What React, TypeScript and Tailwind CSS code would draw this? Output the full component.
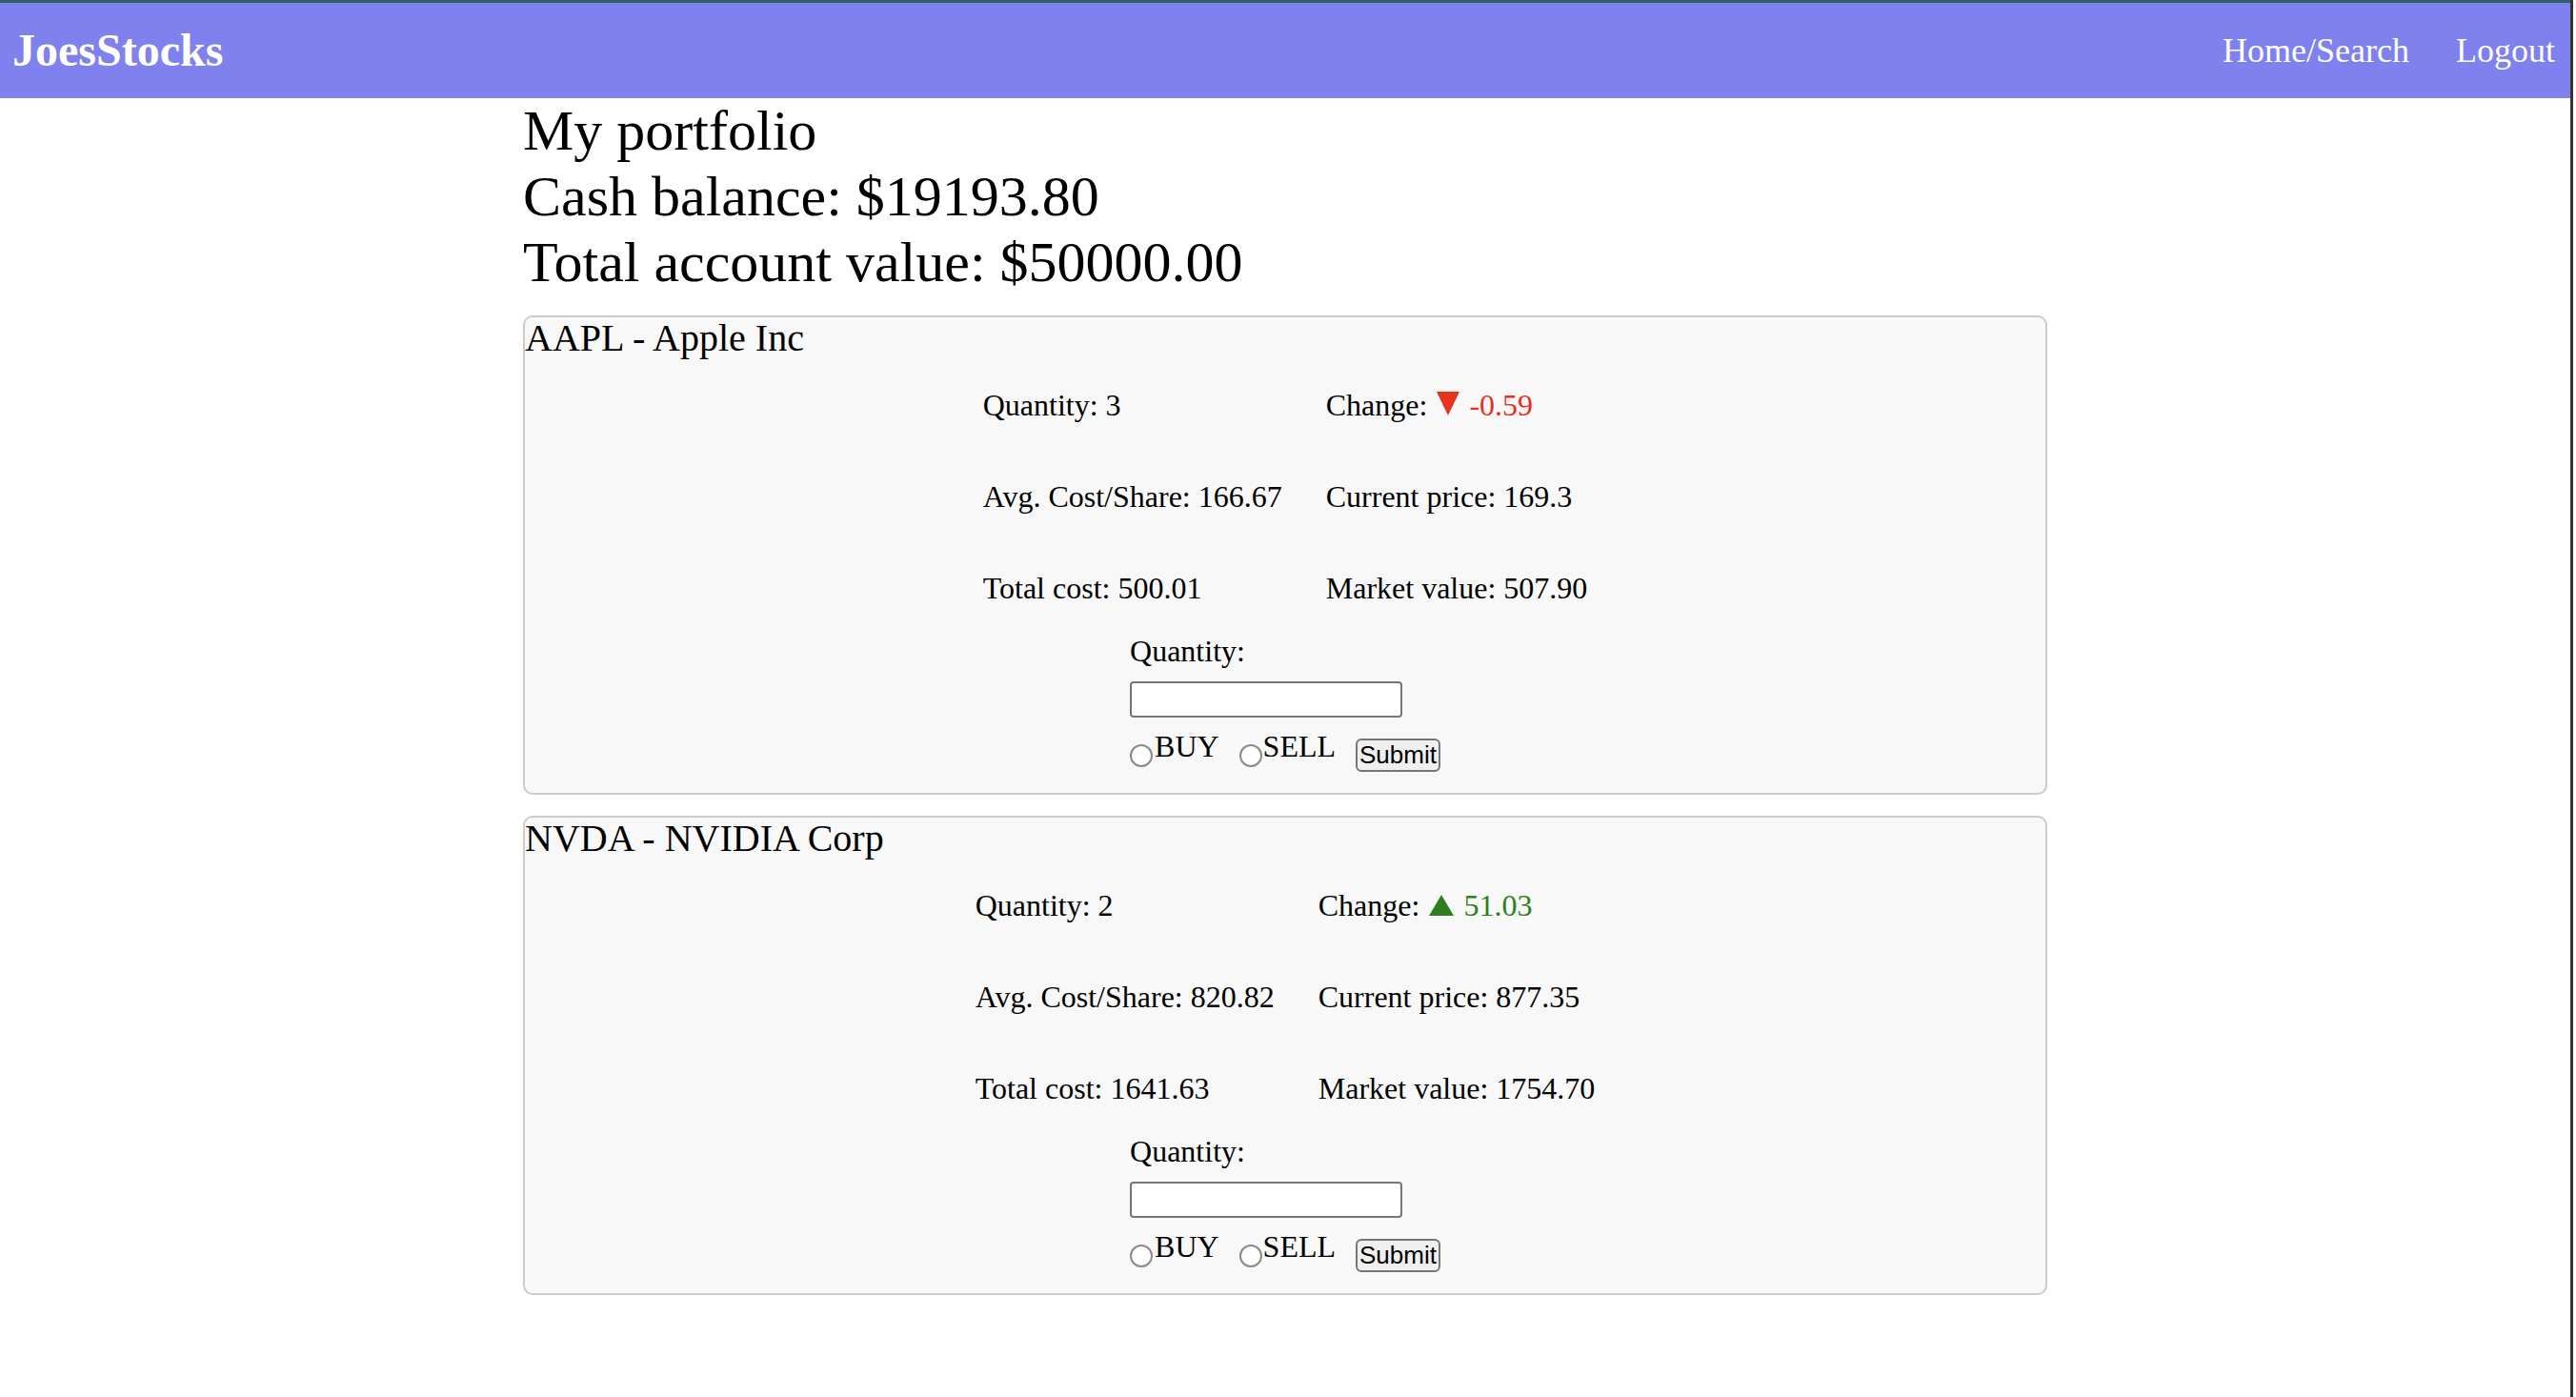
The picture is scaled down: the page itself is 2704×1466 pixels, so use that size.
import React from "react"

type Holding = {
  symbol: string
  name: string
  quantity: number
  change: number
  avgCost: string
  currentPrice: string
  totalCost: string
  marketValue: string
}

const holdings: Holding[] = [
  {
    symbol: "AAPL",
    name: "Apple Inc",
    quantity: 3,
    change: -0.59,
    avgCost: "166.67",
    currentPrice: "169.3",
    totalCost: "500.01",
    marketValue: "507.90",
  },
  {
    symbol: "NVDA",
    name: "NVIDIA Corp",
    quantity: 2,
    change: 51.03,
    avgCost: "820.82",
    currentPrice: "877.35",
    totalCost: "1641.63",
    marketValue: "1754.70",
  },
]

function Navbar() {
  return (
    <div>
      <div className="h-[3px] bg-[#2f6164]" />
      <nav className="h-[100px] bg-[#7f81ef] flex items-center justify-between pl-[13px] pr-[16px] text-white">
        <a href="#" className="text-[48px] font-bold leading-none">
          JoesStocks
        </a>
        <div className="flex items-center gap-[49px] text-[36px] leading-none">
          <a href="#">Home/Search</a>
          <a href="#">Logout</a>
        </div>
      </nav>
    </div>
  )
}

function ChangeValue({ change }: { change: number }) {
  if (change < 0) {
    return (
      <span className="text-[#e3321f]">
        <svg className="inline align-baseline mx-[2px] w-[24px] h-[25px]" viewBox="0 0 24 25">
          <polygon points="0,0 24,0 12,25" fill="#e8321f" />
        </svg>{" "}
        {change.toFixed(2)}
      </span>
    )
  }
  return (
    <span className="text-[#2f7f22]">
      <svg className="inline align-baseline mx-[2px] w-[26px] h-[22px]" viewBox="0 0 26 22">
        <polygon points="13,0 26,22 0,22" fill="#2e7d1e" />
      </svg>{" "}
      {change.toFixed(2)}
    </span>
  )
}

function TradeForm() {
  return (
    <div className="flex justify-center">
      <form className="flex flex-col items-start" onSubmit={(e) => e.preventDefault()}>
        <label className="leading-[37px]">Quantity:</label>
        <input
          type="text"
          className="mt-[13px] w-[286px] h-[38px] border-2 border-[#767676] rounded-[4px] bg-white"
        />
        <div className="flex items-start h-[57px]">
          <input
            type="radio"
            name="side"
            className="appearance-none mt-[28px] w-[24px] h-[24px] rounded-full border-2 border-[#8a8a8a] bg-white"
          />
          <span className="mt-[12px] ml-[2px] leading-[37px]">BUY</span>
          <input
            type="radio"
            name="side"
            className="appearance-none mt-[28px] ml-[21px] w-[24px] h-[24px] rounded-full border-2 border-[#8a8a8a] bg-white"
          />
          <span className="mt-[12px] ml-[1px] leading-[37px]">SELL</span>
          <button
            type="submit"
            className="mt-[22px] ml-[21px] h-[35px] px-[2px] border-2 border-[#767676] rounded-[6px] bg-[#efefef] text-[26px] leading-[29px] font-['Liberation_Sans',Arial,sans-serif]"
          >
            Submit
          </button>
        </div>
      </form>
    </div>
  )
}

function HoldingCard({ h }: { h: Holding }) {
  const rows: [string, React.ReactNode][] = [
    [`Quantity: ${h.quantity}`, <>Change: <ChangeValue change={h.change} /></>],
    [`Avg. Cost/Share: ${h.avgCost}`, `Current price: ${h.currentPrice}`],
    [`Total cost: ${h.totalCost}`, `Market value: ${h.marketValue}`],
  ]
  return (
    <div className="border-2 border-[#cbcbcb] rounded-[10px] bg-[#f8f8f8] pb-[22px]">
      <div className="text-[40px] leading-[44px]">
        {h.symbol} - {h.name}
      </div>
      <table className="mx-auto">
        <tbody>
          {rows.map(([a, b], i) => (
            <tr key={i}>
              <td className="px-[23px] py-[30px] leading-[36px] whitespace-nowrap">{a}</td>
              <td className="px-[23px] py-[30px] leading-[36px] whitespace-nowrap">{b}</td>
            </tr>
          ))}
        </tbody>
      </table>
      <TradeForm />
    </div>
  )
}

export default function App() {
  return (
    <div className="flex min-h-[1466px] bg-white text-black text-[32px] font-['Liberation_Serif','Times_New_Roman',serif]">
      <div className="flex-1">
        <Navbar />
        <main className="w-[1600px] mx-auto">
          <div className="text-[60px] leading-[69px]">
            <div>My portfolio</div>
            <div>Cash balance: $19193.80</div>
            <div>Total account value: $50000.00</div>
          </div>
          <div className="mt-[21px] flex flex-col gap-[22px]">
            {holdings.map((h) => (
              <HoldingCard key={h.symbol} h={h} />
            ))}
          </div>
        </main>
      </div>
      <div className="w-[6px] border-l-[3px] border-[#333333] bg-white" />
    </div>
  )
}
